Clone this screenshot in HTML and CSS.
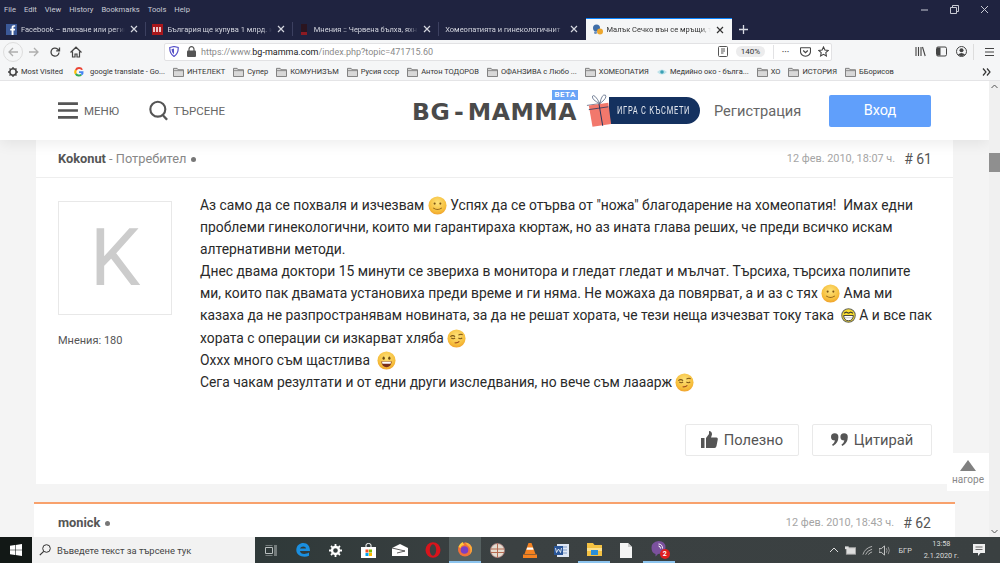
FILE: index.html
```html
<!DOCTYPE html>
<html lang="bg">
<head>
    <meta charset="UTF-8">
    <title>Малък Сечко вън се мръщи</title>
    <link rel="stylesheet" href="styles.css">
</head>
<body>
<svg class="defs" width="0" height="0">
    <defs>
        <radialGradient id="face" cx="50%" cy="35%" r="70%"><stop offset="0" stop-color="#fde27a"/><stop offset=".7" stop-color="#f6bd3a"/><stop offset="1" stop-color="#ee9a2a"/></radialGradient>
    </defs>
    <symbol id="folder" viewBox="0 0 12 11"><path d="M.5 1.500h4l1 1.500h6v7.500h-11z" fill="#d8d8d8" stroke="#777"/><path d="M.5 4h11" stroke="#888"/></symbol>
    <symbol id="close" viewBox="0 0 10 10"><path d="M2 2l6 6M8 2l-6 6" stroke="currentColor" stroke-width="1.200" fill="none"/></symbol>
    <symbol id="smile" viewBox="0 0 20 20"><circle cx="10" cy="10" r="9.500" fill="url(#face)"/><circle cx="7" cy="8" r="1.100" fill="#7b5516"/><circle cx="13" cy="8" r="1.100" fill="#7b5516"/><path d="M5.500 12.500q4.500 3.500 9 0" stroke="#96691c" stroke-width="1.100" fill="none"/></symbol>
    <symbol id="wink" viewBox="0 0 20 20"><circle cx="10" cy="10" r="9.500" fill="url(#face)"/><path d="M3.500 8q2.500-2 5 0M12 6.500q2.500-1.500 4.500-.5" stroke="#7b5516" stroke-width="1.100" fill="none"/><path d="M4.500 9.500q2 1.500 4 0M12 9.500q2 1.500 4 0" stroke="#7b5516" stroke-width="1.100" fill="none"/><path d="M8 14.500q3 .5 5-1.500" stroke="#a4501e" stroke-width="1.200" fill="none"/></symbol>
    <symbol id="grin" viewBox="0 0 20 20"><circle cx="10" cy="10" r="9.500" fill="url(#face)"/><ellipse cx="7" cy="7.500" rx="1.200" ry="1.700" fill="#6b4a12"/><ellipse cx="13" cy="7.500" rx="1.200" ry="1.700" fill="#6b4a12"/><path d="M4.500 11h11q-.8 6-5.500 6T4.500 11z" fill="#7a2f1c"/><path d="M5.300 11.300h9.400l-.4 2H5.700z" fill="#fff"/></symbol>
    <symbol id="laugh" viewBox="0 0 20 20"><circle cx="10" cy="10" r="9" fill="#f8dc2e" stroke="#6a6a5a" stroke-width="1.400"/><path d="M4 7l3-1.500L10 7M10 7l3-1.500L16 7" stroke="#333" stroke-width="1.400" fill="none"/><path d="M3.500 10h13q-.8 7-6.500 7T3.500 10z" fill="#fff" stroke="#333" stroke-width="1.200"/><path d="M4 13h12" stroke="#888" stroke-width=".6"/></symbol>
</svg>

<div class="menu-bar">
    <span>File</span><span>Edit</span><span>View</span><span>History</span><span>Bookmarks</span><span>Tools</span><span>Help</span>
    <div class="window-controls">
        <svg width="10" height="10" viewBox="0 0 10 10"><path d="M1 5h7" stroke="#c8cad4"/></svg>
        <svg width="10" height="10" viewBox="0 0 10 10"><path d="M.5 2.500h6v6h-6zM2.500 2.500v-2h6v6h-2" stroke="#c8cad4" fill="none"/></svg>
        <svg width="10" height="10" viewBox="0 0 10 10"><path d="M1 1l7 7M8 1L1 8" stroke="#c8cad4"/></svg>
    </div>
</div>

<div class="tab-bar">
    <div class="tab">
        <svg class="favicon" viewBox="0 0 11 11"><rect width="11" height="11" fill="#3b5998"/><path d="M7.500 11V6.500h1.400l.2-1.800H7.500V3.600c0-.5.200-.8.900-.8h.8V1.200H8C6.500 1.200 5.600 2 5.600 3.500v1.200H4.200v1.800h1.400V11z" fill="#fff"/></svg>
        <span class="tab-title">Facebook – влизане или регис</span>
        <svg class="tab-close"><use href="#close"/></svg>
    </div>
    <div class="tab">
        <svg class="favicon" viewBox="0 0 11 11"><rect width="11" height="11" fill="#a8171c"/><path d="M2 3v5M5 3v5M8 3v5" stroke="#fff" stroke-width="1.500"/></svg>
        <span class="tab-title">България ще купува 1 млрд. к</span>
        <svg class="tab-close"><use href="#close"/></svg>
    </div>
    <div class="tab">
        <svg class="favicon" viewBox="0 0 11 11"><rect x="2" width="6" height="11" fill="#2b1520"/><rect x="2" y="8" width="6" height="3" fill="#8c1a22"/></svg>
        <span class="tab-title">Мнения :: Червена бълха, яхн</span>
        <svg class="tab-close"><use href="#close"/></svg>
    </div>
    <div class="tab">
        <span class="tab-title">Хомеопатията и гинекологичнит</span>
        <svg class="tab-close"><use href="#close"/></svg>
    </div>
    <div class="tab tab-active">
        <svg class="favicon" viewBox="0 0 11 11"><circle cx="4.500" cy="4" r="3.500" fill="#3f6ea8"/><circle cx="8" cy="7.500" r="3" fill="#eda72e"/><circle cx="3.500" cy="8.500" r="1.500" fill="#6f93bf"/></svg>
        <span class="tab-title">Малък Сечко вън се мръщи, т</span>
        <svg class="tab-close"><use href="#close"/></svg>
    </div>
    <svg class="new-tab" width="11" height="11" viewBox="0 0 11 11"><path d="M5.500 1v9M1 5.500h9" stroke="#d8dae2" stroke-width="1.300"/></svg>
</div>

<div class="toolbar">
    <div class="back-btn">
        <svg width="12" height="12" viewBox="0 0 12 12"><path d="M11 6H2M6 2L2 6l4 4" stroke="#aeaeae" stroke-width="1.300" fill="none"/></svg>
    </div>
    <svg class="tool-icon" width="12" height="12" viewBox="0 0 12 12"><path d="M1 6h9M6 2l4 4-4 4" stroke="#aeaeae" stroke-width="1.300" fill="none"/></svg>
    <svg class="tool-icon" width="12" height="12" viewBox="0 0 12 12"><path d="M10 6.500A4 4 0 1 1 8.500 3L10 4.500M10.500 1.500v3.300H7.200" stroke="#444" stroke-width="1.300" fill="none"/></svg>
    <svg class="tool-icon" width="12" height="12" viewBox="0 0 12 12"><path d="M.5 6.500L6 1.200l5.500 5.300M2.500 5.500v5.500h2.500V8h2v3h2.500V5.500" stroke="#444" stroke-width="1.200" fill="none"/></svg>
    <div class="url-bar">
        <svg width="10" height="11" viewBox="0 0 10 11"><path d="M.8 1.500L5 .5l4.200 1q.3 6-4.200 9-4.500-3-4.200-9z" fill="#fff" stroke="#5550c8" stroke-width="1.200"/><path d="M5 2.500v6q-2.500-2-2.500-5.200z" fill="#5550c8"/></svg>
        <svg class="lock" width="9" height="11" viewBox="0 0 9 11"><path d="M2 5V3.200a2.500 2.500 0 0 1 5 0V5" stroke="#555" fill="none" stroke-width="1.200"/><rect y="4.500" width="9" height="6.500" rx="1" fill="#555"/></svg>
        <span class="url"><span class="url-dim">https://www.</span>bg-mamma.com<span class="url-dim">/index.php?topic=471715.60</span></span>
        <svg class="reader" width="10" height="11" viewBox="0 0 10 11"><rect x=".5" y=".5" width="9" height="10" rx="1" fill="none" stroke="#555"/><path d="M3 3h4M3 5h4M3 7h2.500" stroke="#555"/></svg>
        <span class="zoom-pill">140%</span>
        <span class="url-sep"></span>
        <span class="dots">•••</span>
        <svg width="11" height="10" viewBox="0 0 11 10"><path d="M1 .8h9q.5 0 .5.600v3q0 4.100-5 4.800-5-.7-5-4.800v-3Q.5.800 1 .8z" fill="none" stroke="#444" stroke-width="1.100"/><path d="M3.200 3.500L5.500 5.700l2.300-2.200" fill="none" stroke="#444" stroke-width="1.200"/></svg>
        <svg class="star" width="11" height="11" viewBox="0 0 11 11"><path d="M5.500 1l1.400 3 3.300.4-2.400 2.200.6 3.300-2.900-1.600-2.900 1.600.6-3.300L.8 4.400 4.100 4z" fill="none" stroke="#444" stroke-width="1.100"/></svg>
    </div>
    <div class="tool-right">
        <svg width="11" height="11" viewBox="0 0 11 11"><path d="M1 1v9M3.500 1v9M6 1v9M7.500 1l2.700 9" stroke="#444" stroke-width="1.100" fill="none"/></svg>
        <svg width="11" height="11" viewBox="0 0 11 11"><rect x=".5" y="1" width="10" height="9" rx="1.500" fill="none" stroke="#444"/><rect x="1" y="1.500" width="3.500" height="8" fill="#444"/></svg>
        <svg width="11" height="11" viewBox="0 0 11 11"><circle cx="5.500" cy="5.500" r="5" fill="none" stroke="#444"/><circle cx="5.500" cy="4.200" r="2" fill="#444"/><path d="M2 8.500q3.500-3 7 0-3.500 3-7 0z" fill="#444"/></svg>
        <span class="tool-sep"></span>
        <svg width="11" height="10" viewBox="0 0 11 10"><path d="M1 1.500h9M1 5h9M1 8.500h9" stroke="#444" stroke-width="1.200"/></svg>
    </div>
</div>

<div class="bookmarks">
    <span class="bm"><svg width="10" height="10" viewBox="0 0 10 10"><circle cx="5" cy="5" r="3.200" fill="none" stroke="#444" stroke-width="1.600"/><path d="M5 0v2M5 8v2M0 5h2M8 5h2M1.500 1.500l1.300 1.300M7.200 7.200l1.300 1.300M8.500 1.500L7.200 2.800M2.800 7.200L1.500 8.500" stroke="#444" stroke-width="1.300"/></svg>Most Visited</span>
    <span class="bm bm-google"><svg width="10" height="10" viewBox="0 0 10 10"><path d="M9 2.500A4.500 4.500 0 0 0 1 2.500l1.700 1.300A2.700 2.700 0 0 1 7.300 3z" fill="#ea4335"/><path d="M1 2.500a4.500 4.500 0 0 0 0 5l1.700-1.300a2.700 2.700 0 0 1 0-2.400z" fill="#fbbc05"/><path d="M1 7.500a4.500 4.500 0 0 0 7 .8L6.500 7a2.700 2.700 0 0 1-3.800-.8z" fill="#34a853"/><path d="M9.500 4.200H5V6h2.600q-.3.600-1.100 1l1.500 1.300Q10 6.800 9.500 4.200z" fill="#4285f4"/></svg>google translate - Go...</span>
    <span class="bm"><svg class="bm-folder"><use href="#folder"/></svg>ИНТЕЛЕКТ</span>
    <span class="bm"><svg class="bm-folder"><use href="#folder"/></svg>Супер</span>
    <span class="bm"><svg class="bm-folder"><use href="#folder"/></svg>КОМУНИЗЪМ</span>
    <span class="bm"><svg class="bm-folder"><use href="#folder"/></svg>Русия ссср</span>
    <span class="bm"><svg class="bm-folder"><use href="#folder"/></svg>Антон ТОДОРОВ</span>
    <span class="bm"><svg class="bm-folder"><use href="#folder"/></svg>ОФАНЗИВА с Любо ...</span>
    <span class="bm"><svg class="bm-folder"><use href="#folder"/></svg>ХОМЕОПАТИЯ</span>
    <span class="bm"><svg width="10" height="10" viewBox="0 0 10 10"><path d="M0 5q5-5 10 0-5 5-10 0z" fill="#bfe3ea"/><circle cx="5" cy="5" r="1.800" fill="#3aa0b5"/></svg>Медийно око - бълга...</span>
    <span class="bm"><svg class="bm-folder"><use href="#folder"/></svg>ХО</span>
    <span class="bm"><svg class="bm-folder"><use href="#folder"/></svg>ИСТОРИЯ</span>
    <span class="bm"><svg class="bm-folder"><use href="#folder"/></svg>ББорисов</span>
    <svg class="bm-more" width="9" height="8" viewBox="0 0 9 8"><path d="M1 .5L4 4 1 7.500M5 .5L8 4 5 7.500" stroke="#333" stroke-width="1.200" fill="none"/></svg>
</div>

<div class="viewport">
    <div class="page">
        <header class="site-header">
            <div class="nav-item">
                <svg width="22" height="19" viewBox="0 0 22 19"><path d="M0 2h22M0 9.500h22M0 17h22" stroke="#555" stroke-width="3"/></svg>
                <span>МЕНЮ</span>
            </div>
            <div class="nav-item nav-search">
                <svg width="22" height="23" viewBox="0 0 22 23"><circle cx="10" cy="10" r="8.500" fill="none" stroke="#555" stroke-width="2.400"/><path d="M15.500 16.500l5 5.500" stroke="#555" stroke-width="2.600"/></svg>
                <span>ТЪРСЕНЕ</span>
            </div>
            <div class="logo">BG - MAMMA<span class="beta">BETA</span></div>
            <div class="promo">
                <svg class="gift" width="26" height="36" viewBox="0 0 28 38"><path d="M15 11Q9 0 7 3q-1 4 8 8zM15 11q2-11 6-9 2 3-6 9zM15 11L1 13" fill="none" stroke="#4a5a78" stroke-width=".8"/><path d="M3 13l21-3 3 23-20 3z" fill="#f2786c"/><path d="M14 11.500L18 35" stroke="#15325f" stroke-width="1"/><path d="M3 17.500l21-3" stroke="#15325f" stroke-width=".8"/></svg>
                <span class="promo-pill"><span class="promo-text">ИГРА С КЪСМЕТИ</span></span>
            </div>
            <span class="register">Регистрация</span>
            <span class="login">Вход</span>
        </header>

        <div class="topic">
            <article class="post">
                <div class="post-head">
                    <span><b>Kokonut</b><span class="role"> - Потребител</span><span class="dot"></span></span>
                    <span class="post-meta"><span class="post-date">12 фев. 2010, 18:07 ч.</span><span class="post-num"># 61</span></span>
                </div>
                <div class="post-body">
                    <div class="author">
                        <div class="avatar">K</div>
                        <div class="author-count">Мнения: 180</div>
                    </div>
                    <div class="post-main">
                        <div class="post-text">
                            Аз само да се похваля и изчезвам <svg class="emoji"><use href="#smile"/></svg> Успях да се отърва от "ножа" благодарение на хомеопатия!&nbsp; Имах едни<br>
                            проблеми гинекологични, които ми гарантираха кюртаж, но аз ината глава реших, че преди всичко искам<br>
                            алтернативни методи.<br>
                            Днес двама доктори 15 минути се звериха в монитора и гледат гледат и мълчат. Търсиха, търсиха полипите<br>
                            ми, които пак двамата установиха преди време и ги няма. Не можаха да повярват, а и аз с тях <svg class="emoji"><use href="#smile"/></svg> Ама ми<br>
                            казаха да не разпространявам новината, за да не решат хората, че тези неща изчезват току така&nbsp; <svg class="emoji emoji-small"><use href="#laugh"/></svg> А и все пак<br>
                            хората с операции си изкарват хляба <svg class="emoji"><use href="#wink"/></svg><br>
                            Охxx много съм щастлива&nbsp; <svg class="emoji"><use href="#grin"/></svg><br>
                            Сега чакам резултати и от едни други изследвания, но вече съм лааарж <svg class="emoji"><use href="#wink"/></svg>
                        </div>
                        <div class="post-actions">
                            <span class="action-btn action-like"><svg width="17" height="17" viewBox="0 0 17 17"><path d="M0 7h3.500v10H0zM5 7l3-4V0q3 0 3 3.500L10 6.500h5.500q1.500.2 1.300 1.800L15.500 15q-.4 2-2 2H5z" fill="#555"/></svg>Полезно</span>
                            <span class="action-btn action-quote"><svg width="17" height="13" viewBox="0 0 17 13"><path d="M0 4a3.700 3.700 0 1 1 7.400 0q0 6-5.400 9l-1-1.300q2.500-1.700 3-4.200Q0 7.500 0 4zM9.400 4a3.700 3.700 0 1 1 7.400 0q0 6-5.400 9l-1-1.300q2.500-1.700 3-4.200-4 0-4-3.500z" fill="#555"/></svg>Цитирай</span>
                        </div>
                    </div>
                </div>
            </article>
            <article class="post post-next">
                <div class="post-head">
                    <span><b>monick</b><span class="dot"></span></span>
                    <span class="post-meta"><span class="post-date">12 фев. 2010, 18:43 ч.</span><span class="post-num"># 62</span></span>
                </div>
            </article>
        </div>

        <div class="to-top">
            <svg width="16" height="11" viewBox="0 0 16 11"><path d="M8 0l8 11H0z" fill="#808080"/></svg>
            <span>нагоре</span>
        </div>
    </div>
    <div class="scrollbar">
        <svg width="7" height="5" viewBox="0 0 7 5"><path d="M.5 4L3.500 1l3 3" stroke="#555" fill="none"/></svg>
        <div class="scroll-thumb"></div>
        <svg class="scroll-down" width="7" height="5" viewBox="0 0 7 5"><path d="M.5 1l3 3 3-3" stroke="#555" fill="none"/></svg>
    </div>
</div>

<footer class="taskbar">
    <div class="start">
        <svg width="12" height="12" viewBox="0 0 12 12"><path d="M0 1.700L5 1v4.700H0zM5.600.9L12 0v5.700H5.600zM0 6.300h5V11l-5-.7zM5.600 6.300H12V12l-6.400-.9z" fill="#fff"/></svg>
    </div>
    <div class="task-search">
        <svg width="12" height="12" viewBox="0 0 12 12"><circle cx="7.500" cy="4.500" r="3.800" fill="none" stroke="#333"/><path d="M4.700 7.300L.8 11.200" stroke="#333" stroke-width="1.200"/></svg>
        <span>Въведете текст за търсене тук</span>
    </div>
    <div class="task-icons">
        <span class="task-icon"><svg width="12" height="11" viewBox="0 0 12 11"><path d="M.5 2.500h7v6h-7zM.5 0h7M.5 11h7M10 0v11M12 0v11" stroke="#b9bfbf" fill="none"/></svg></span>
        <span class="task-icon"><svg width="14" height="14" viewBox="0 0 14 14"><path d="M.3 7C.5 2 4 0 7.300 0 11.500 0 14 3 14 8H4c.2 3 5 4 9 1.500v3.200C8 15 .3 13 .3 7zM4 5.600h6C10 3 5 2.500 4 5.600z" fill="#1a8fe0"/></svg></span>
        <span class="task-icon"><svg width="13" height="13" viewBox="0 0 13 13"><circle cx="6.500" cy="6.500" r="3.500" fill="none" stroke="#fff" stroke-width="2.400"/><path d="M6.500 0v2.500M6.500 10.500V13M0 6.500h2.500M10.500 6.500H13M2 2l1.600 1.600M9.400 9.400L11 11M11 2L9.400 3.600M3.600 9.400L2 11" stroke="#fff" stroke-width="1.800"/></svg></span>
        <span class="task-icon"><svg width="15" height="15" viewBox="0 0 15 15"><path d="M0 4h15v11H0z" fill="#fff"/><path d="M5 4V2q0-1.500 2.500-1.500T10 2v2" stroke="#fff" fill="none"/><path d="M4.500 6.500h3v3h-3z" fill="#f25022"/><path d="M8 6.500h3v3H8z" fill="#7fba00"/><path d="M4.500 10h3v3h-3z" fill="#00a4ef"/><path d="M8 10h3v3H8z" fill="#ffb900"/></svg></span>
        <span class="task-icon"><svg width="16" height="12" viewBox="0 0 16 12"><path d="M0 4l8-4 8 4v8H0z" fill="#fff"/><path d="M0 4l13 3-8 2" stroke="#333" fill="none" stroke-width=".8"/></svg></span>
        <span class="task-icon"><svg width="16" height="16" viewBox="0 0 16 16"><ellipse cx="8" cy="8" rx="7.500" ry="7.800" fill="#d8141c"/><ellipse cx="8" cy="8" rx="3.200" ry="5.800" fill="#3a4040"/></svg></span>
        <span class="task-icon task-active"><svg width="16" height="16" viewBox="0 0 16 16"><circle cx="8" cy="8.500" r="7" fill="#f0703a"/><path d="M8 1.500a7 7 0 0 1 7 7q0 3-2 5Q15 7 10 4z" fill="#fbb03b"/><circle cx="7.500" cy="9" r="3.800" fill="#7a3fc4"/><path d="M1.500 6Q3 2 6 1q-.5 2 1.500 3Q4 4 3.500 7z" fill="#ffca3a"/></svg></span>
        <span class="task-icon"><svg width="15" height="15" viewBox="0 0 15 15"><circle cx="7.500" cy="7.500" r="7" fill="#e4dcd0" stroke="#a77" stroke-width=".8"/><path d="M1 6h13M1 9.500h13M7.500 .5v14" stroke="#b56a50"/></svg></span>
        <span class="task-icon"><svg width="14" height="15" viewBox="0 0 14 15"><path d="M5.500 0h3l4 11H1.500z" fill="#f58220"/><path d="M4.200 4.500h5.600l.8 2.300H3.400z" fill="#fff"/><path d="M0 11.500h14V15H0z" fill="#f58220"/></svg></span>
        <span class="task-icon"><svg width="15" height="15" viewBox="0 0 15 15"><rect x="3" y="1" width="12" height="13" fill="#dfe7f4"/><path d="M5 4h8M5 7h8M5 10h8" stroke="#7f9cc8"/><rect y="3" width="9" height="9" fill="#2a5699"/><path d="M1.500 5l1 4.500L4.500 6l2 3.500 1-4.500" stroke="#fff" fill="none" stroke-width=".8"/></svg></span>
        <span class="task-icon task-open"><svg width="15" height="13" viewBox="0 0 15 13"><path d="M0 0h6l1.500 2H15v11H0z" fill="#f5c242"/><path d="M0 5h15v3H0z" fill="#fde08a"/><rect x="4" y="7" width="7" height="5" fill="#2a8fd8"/></svg></span>
        <span class="task-icon"><svg width="12" height="15" viewBox="0 0 12 15"><path d="M0 0h8l4 4v11H0z" fill="#f4f4f4"/><path d="M8 0l4 4H8z" fill="#ccc"/></svg></span>
        <span class="task-icon task-open"><svg width="15" height="16" viewBox="0 0 15 16"><path d="M7.500 0q7 0 7 6.500T7 13l-2.500 2.500V13Q.5 12 .5 6.500T7.500 0z" fill="#7b519d"/><path d="M7.500 3q4 .2 4 4.500M7.500 5q2 .2 2 2.500" stroke="#fff" fill="none"/></svg><span class="task-badge">2</span></span>
    </div>
    <div class="tray">
        <svg width="10" height="6" viewBox="0 0 10 6"><path d="M1 5l4-4 4 4" stroke="#ddd" fill="none"/></svg>
        <svg width="11" height="9" viewBox="0 0 12 9"><rect x="1.500" y="1.500" width="10" height="7" fill="#ddd" stroke="#aaa"/><rect y="0" width="4" height="3" fill="#ddd"/></svg>
        <svg width="11" height="11" viewBox="0 0 12 11"><path d="M1 10Q3 3 11 1M4 10Q5 6 11 4M7 10q1-2 4-3" stroke="#bbb" fill="none"/></svg>
        <svg width="11" height="11" viewBox="0 0 12 11"><path d="M0 3.500h2.500L6 .5v10L2.500 7.500H0z" fill="none" stroke="#ddd" stroke-width=".9"/><path d="M8 3q1.500 2.500 0 5M10 1.500q2.500 4 0 8" stroke="#999" fill="none"/></svg>
        <span class="tray-lang">БГР</span>
        <span class="tray-clock"><span>13:58</span><span>2.1.2020 г.</span></span>
        <svg class="tray-note" width="12" height="12" viewBox="0 0 12 12"><path d="M0 0h12v9H7.500L5 12V9H0z" fill="#eee"/><path d="M2.500 3h7M2.500 5.500h7" stroke="#444" stroke-width=".8"/></svg>
    </div>
</footer>
</body>
</html>
```

FILE: styles.css
```css
html, body {
    margin: 0;
    height: 100%;
    overflow: hidden;
}
body {
    display: flex;
    flex-direction: column;
    font-family: "Roboto", "Liberation Sans", sans-serif;
    background-color: #fff;
}
.defs {
    position: absolute;
}

/* browser chrome */
.menu-bar {
    height: 18px;
    flex: none;
    display: flex;
    align-items: center;
    gap: 8px;
    padding-left: 4px;
    background-color: #1f2340;
    color: #c9cbd6;
    font: 7.600px "Roboto", sans-serif;
}
.window-controls {
    margin-left: auto;
    display: flex;
    gap: 20px;
    padding-right: 10px;
    padding-top: 1px;
}
.tab-bar {
    height: 22px;
    flex: none;
    display: flex;
    align-items: stretch;
    background-color: #1f2340;
    color: #d4d6df;
    font: 7.500px "Roboto", sans-serif;
}
.tab {
    width: 146.400px;
    box-sizing: border-box;
    display: flex;
    align-items: center;
    padding: 0 7px 0 6px;
    gap: 4px;
    position: relative;
}
.tab + .tab::before {
    content: "";
    position: absolute;
    left: -1px;
    top: 4px;
    bottom: 4px;
    width: 1px;
    background-color: #3c4060;
}
.tab-active {
    background-color: #f5f6f7;
    color: #333;
    border-top: 1px solid #0a84ff;
}
.tab-active::before {
    display: none;
}
.favicon {
    width: 11px;
    height: 11px;
    flex: none;
}
.tab-title {
    flex: 1;
    min-width: 0;
    white-space: nowrap;
    overflow: hidden;
    -webkit-mask-image: linear-gradient(to right, #000 90%, transparent);
    mask-image: linear-gradient(to right, #000 90%, transparent);
}
.tab-close {
    width: 10px;
    height: 10px;
    flex: none;
}
.new-tab {
    align-self: center;
    margin-left: 6px;
}
.toolbar {
    height: 23px;
    flex: none;
    display: flex;
    align-items: center;
    background-color: #f5f6f7;
    padding-left: 3px;
    box-sizing: border-box;
}
.back-btn {
    width: 20px;
    height: 20px;
    border: 1px solid #ddd;
    border-radius: 50%;
    box-sizing: border-box;
    display: flex;
    align-items: center;
    justify-content: center;
    margin-right: 5px;
}
.tool-icon {
    margin-right: 9px;
}
.url-bar {
    width: 668px;
    height: 18px;
    margin-left: 73px;
    box-sizing: border-box;
    background-color: #fff;
    border: 1px solid #e2e2e4;
    border-radius: 2px;
    display: flex;
    align-items: center;
    padding: 0 2px 0 4px;
    font: 9px "Roboto", sans-serif;
    color: #222;
}
.lock {
    margin-left: 8px;
}
.url {
    margin-left: 5px;
    flex: 1;
}
.url-dim {
    color: #8a8a8a;
}
.reader {
    margin-right: 8px;
}
.zoom-pill {
    width: 29px;
    height: 11px;
    line-height: 11px;
    text-align: center;
    border-radius: 6px;
    background-color: #ececed;
    font-size: 8px;
    color: #333;
}
.url-sep {
    width: 1px;
    height: 14px;
    background-color: #e2e2e4;
    margin: 0 8px;
}
.dots {
    width: 11px;
    font-size: 6px;
    color: #444;
    margin-right: 7px;
    letter-spacing: 0.500px;
}
.star {
    margin-left: 7px;
}
.tool-right {
    margin-left: 83px;
    display: flex;
    align-items: center;
    gap: 9.500px;
}
.tool-sep {
    width: 1px;
    height: 16px;
    background-color: #ddd;
    margin-left: -3.500px;
}
.bookmarks {
    height: 17px;
    flex: none;
    display: flex;
    align-items: center;
    gap: 8px;
    padding-left: 8px;
    background-color: #f5f6f7;
    color: #333;
    font: 7.500px "Roboto", sans-serif;
    white-space: nowrap;
    border-bottom: 1px solid #e4e4e6;
}
.bm {
    display: flex;
    align-items: center;
    gap: 3px;
}
.bm-google {
    gap: 6px;
    margin-left: 3px;
}
.bm-folder {
    width: 11px;
    height: 10px;
}
.bm-more {
    margin-left: auto;
    margin-right: 9px;
}

/* page */
.viewport {
    flex: 1;
    min-height: 0;
    display: flex;
}
.page {
    flex: 1;
    min-width: 0;
    position: relative;
    overflow: hidden;
    background-color: #f4f4f4;
}
.scrollbar {
    width: 11px;
    flex: none;
    box-sizing: border-box;
    background-color: #f0f0f0;
    display: flex;
    flex-direction: column;
    align-items: center;
    padding: 3px 0;
}
.scroll-thumb {
    width: 100%;
    height: 19px;
    margin-top: 64px;
    background-color: #8f8f8f;
}
.scroll-down {
    margin-top: auto;
}
.site-header {
    height: 59px;
    position: relative;
    z-index: 1;
    display: flex;
    align-items: center;
    padding-left: 58px;
    background-color: #fff;
    box-shadow: 0 3px 14px rgba(0, 0, 0, 0.08);
    color: #555;
}
.nav-item {
    display: flex;
    align-items: center;
    gap: 6px;
    font-size: 11.500px;
    color: #666;
    width: 61px;
}
.nav-search {
    margin-left: 30px;
    gap: 5px;
    width: 76px;
}
.logo {
    margin-left: 187px;
    margin-top: 3px;
    width: 166px;
    flex: none;
    position: relative;
    font: bold 23.500px/18px "DejaVu Sans", sans-serif;
    letter-spacing: 0.500px;
    word-spacing: -5px;
    color: #4a4a4a;
    white-space: nowrap;
}
.beta {
    position: absolute;
    right: 0;
    top: -13px;
    padding: 0 2px;
    background-color: #6aa5f7;
    color: #fff;
    font: bold 8px/10px "Roboto", sans-serif;
    letter-spacing: 0.500px;
}
.promo {
    margin-left: 8px;
    display: flex;
    align-items: center;
    width: 114px;
}
.gift {
    flex: none;
    position: relative;
    z-index: 1;
    margin-right: -3px;
}
.promo-pill {
    width: 91px;
    flex: none;
    box-sizing: border-box;
    padding-left: 8px;
    border-radius: 0 14px 14px 0;
    background-color: #14315f;
    color: #e4e8ef;
    font: 7.500px/27px "Roboto", sans-serif;
    letter-spacing: 0.700px;
    white-space: nowrap;
}
.promo-text {
    display: inline-block;
    transform: scaleY(1.350);
}
.register {
    margin-left: 14px;
    font-size: 14.600px;
    color: #666;
    width: 87px;
    flex: none;
}
.login {
    margin-left: 28px;
    width: 102px;
    height: 32px;
    line-height: 32px;
    text-align: center;
    border-radius: 2px;
    background-color: #609ffb;
    color: #fff;
    font-size: 14.500px;
}
.topic {
    margin-left: 36px;
    width: 917px;
    display: flex;
    flex-direction: column;
    gap: 18px;
}
.post {
    background-color: #fff;
    padding: 0 21px 0 22px;
}
.post-next {
    border-top: 2px solid #f8a16c;
    margin-left: -2px;
    width: 921px;
    padding-left: 24px;
    box-sizing: border-box;
    padding-right: 24px;
    height: 60px;
}
.post-head {
    height: 38px;
    box-sizing: border-box;
    display: flex;
    align-items: center;
    justify-content: space-between;
    font-size: 12.800px;
    color: #555;
    margin: 0 -21px 0 -22px;
    padding: 0 21px 0 22px;
    border-bottom: 1px solid #eee;
}
.post-next .post-head {
    margin: 0;
    padding: 0;
    border: 0;
}
.role {
    color: #888;
}
.dot {
    display: inline-block;
    width: 5px;
    height: 5px;
    border-radius: 50%;
    background-color: #777;
    margin-left: 5px;
    vertical-align: 1px;
}
.post-meta {
    display: flex;
    align-items: center;
    gap: 9px;
}
.post-date {
    font-size: 10.900px;
    color: #a5a5a5;
}
.post-num {
    font-size: 14px;
    color: #555;
}
.post-body {
    display: flex;
    padding-top: 16px;
}
.author {
    width: 142px;
    flex: none;
    padding-top: 7px;
    font-size: 11px;
    color: #555;
}
.avatar {
    width: 114px;
    height: 114px;
    box-sizing: border-box;
    border: 1px solid #e8e8e8;
    text-align: center;
    line-height: 112px;
    font-size: 80px;
    color: #ccc;
}
.author-count {
    margin-top: 19px;
}
.post-main {
    flex: 1;
    min-width: 0;
}
.post-text {
    font-size: 13.850px;
    line-height: 22.100px;
    color: #2a2a2a;
    white-space: nowrap;
}
.emoji {
    width: 19px;
    height: 19px;
    vertical-align: -5px;
}
.emoji-small {
    width: 15px;
    height: 15px;
    vertical-align: -3px;
}
.post-actions {
    display: flex;
    justify-content: flex-end;
    gap: 13px;
    margin-top: 31px;
    padding-bottom: 28px;
}
.action-btn {
    height: 32px;
    box-sizing: border-box;
    display: flex;
    align-items: center;
    justify-content: center;
    gap: 6px;
    border: 1px solid #e9e9e9;
    border-radius: 2px;
    font-size: 14.700px;
    color: #555;
}
.action-like {
    width: 114px;
}
.action-quote {
    width: 120px;
}
.to-top {
    position: absolute;
    right: 0;
    top: 372px;
    width: 42px;
    height: 38px;
    background-color: #fff;
    display: flex;
    flex-direction: column;
    align-items: center;
    justify-content: center;
    gap: 3px;
    font-size: 10px;
    color: #888;
    z-index: 2;
}

/* windows taskbar */
.taskbar {
    height: 26px;
    flex: none;
    display: flex;
    align-items: stretch;
    background: linear-gradient(to right, #22302f, #3b4142 50%, #3a4041);
    color: #dcdcdc;
}
.start {
    width: 32px;
    flex: none;
    display: flex;
    align-items: center;
    justify-content: center;
    background-color: #121816;
}
.task-search {
    width: 223px;
    flex: none;
    box-sizing: border-box;
    display: flex;
    align-items: center;
    gap: 6px;
    padding-left: 7px;
    background-color: #f2f2f2;
    color: #444;
    font: 9.400px "Roboto", sans-serif;
}
.task-icons {
    display: flex;
}
.task-icon {
    width: 32.300px;
    display: flex;
    align-items: center;
    justify-content: center;
    position: relative;
    box-sizing: border-box;
}
.task-active {
    background-color: #556060;
    border-bottom: 2px solid #8cc4ee;
}
.task-open {
    border-bottom: 2px solid #8cc4ee;
}
.task-badge {
    position: absolute;
    right: 5px;
    bottom: 2px;
    width: 10px;
    height: 10px;
    border-radius: 50%;
    background-color: #e02020;
    color: #fff;
    font: bold 7px/10px "Roboto", sans-serif;
    text-align: center;
}
.tray {
    margin-left: auto;
    display: flex;
    align-items: center;
    gap: 6px;
    padding-right: 15px;
    font: 7.300px "Roboto", sans-serif;
}
.tray-lang {
    margin-left: 2px;
}
.tray-clock {
    display: flex;
    flex-direction: column;
    align-items: center;
    line-height: 12px;
    margin-left: 6px;
}
.tray-note {
    margin-left: 8px;
}
```
